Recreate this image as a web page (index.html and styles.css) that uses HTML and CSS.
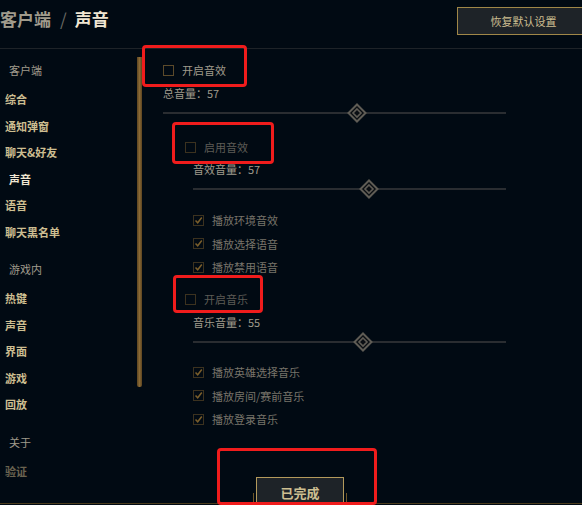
FILE: index.html
```html
<!DOCTYPE html>
<html lang="zh-CN">
<head>
  <meta charset="UTF-8">
  <title>客户端 / 声音</title>
  <link rel="stylesheet" href="styles.css">
</head>
<body>
  <div class="header">
    <h1 class="title"><span class="crumb">客户端</span><span class="sep">/</span><span class="current">声音</span></h1>
    <button class="btn reset">恢复默认设置</button>
  </div>

  <div class="main">
    <div class="nav">
      <div class="group">
        <div class="label">客户端</div>
        <div class="item">综合</div>
        <div class="item">通知弹窗</div>
        <div class="item">聊天&amp;好友</div>
        <div class="item active">声音</div>
        <div class="item">语音</div>
        <div class="item">聊天黑名单</div>
      </div>
      <div class="group">
        <div class="label">游戏内</div>
        <div class="item">热键</div>
        <div class="item">声音</div>
        <div class="item">界面</div>
        <div class="item">游戏</div>
        <div class="item">回放</div>
      </div>
      <div class="group">
        <div class="label">关于</div>
        <div class="item faded">验证</div>
      </div>
    </div>

    <div class="scrollbar"><div class="thumb"></div></div>

    <div class="content">
      <div class="check main-toggle"><span class="box"></span>开启音效</div>
      <div class="vol">总音量：57</div>
      <div class="slider"><div class="track"></div><div class="knob" style="left:57%"><svg width="20" height="20" viewBox="0 0 20 20"><polygon points="10,1.5 18.5,10 10,18.5 1.5,10" fill="#0a0e13" stroke="#5f5c55" stroke-width="2"/><polygon points="10,6 14,10 10,14 6,10" fill="none" stroke="#5f5c55" stroke-width="1.6"/></svg></div></div>

      <div class="section">
        <div class="check toggle dim"><span class="box"></span>启用音效</div>
        <div class="sub">
          <div class="vol">音效音量：57</div>
          <div class="slider"><div class="track"></div><div class="knob" style="left:57%"><svg width="20" height="20" viewBox="0 0 20 20"><polygon points="10,1.5 18.5,10 10,18.5 1.5,10" fill="#0a0e13" stroke="#5f5c55" stroke-width="2"/><polygon points="10,6 14,10 10,14 6,10" fill="none" stroke="#5f5c55" stroke-width="1.6"/></svg></div></div>
          <div class="list">
            <div class="check checked"><span class="box"><svg width="9" height="9" viewBox="0 0 9 9"><polyline points="1.5,4.5 3.7,6.8 7.8,1.5" fill="none" stroke="#7a5e2b" stroke-width="1.5"/></svg></span>播放环境音效</div>
            <div class="check checked"><span class="box"><svg width="9" height="9" viewBox="0 0 9 9"><polyline points="1.5,4.5 3.7,6.8 7.8,1.5" fill="none" stroke="#7a5e2b" stroke-width="1.5"/></svg></span>播放选择语音</div>
            <div class="check checked"><span class="box"><svg width="9" height="9" viewBox="0 0 9 9"><polyline points="1.5,4.5 3.7,6.8 7.8,1.5" fill="none" stroke="#7a5e2b" stroke-width="1.5"/></svg></span>播放禁用语音</div>
          </div>
        </div>
      </div>

      <div class="section music">
        <div class="check toggle dim"><span class="box"></span>开启音乐</div>
        <div class="sub">
          <div class="vol">音乐音量：55</div>
          <div class="slider"><div class="track"></div><div class="knob" style="left:55%"><svg width="20" height="20" viewBox="0 0 20 20"><polygon points="10,1.5 18.5,10 10,18.5 1.5,10" fill="#0a0e13" stroke="#5f5c55" stroke-width="2"/><polygon points="10,6 14,10 10,14 6,10" fill="none" stroke="#5f5c55" stroke-width="1.6"/></svg></div></div>
          <div class="list">
            <div class="check checked"><span class="box"><svg width="9" height="9" viewBox="0 0 9 9"><polyline points="1.5,4.5 3.7,6.8 7.8,1.5" fill="none" stroke="#7a5e2b" stroke-width="1.5"/></svg></span>播放英雄选择音乐</div>
            <div class="check checked"><span class="box"><svg width="9" height="9" viewBox="0 0 9 9"><polyline points="1.5,4.5 3.7,6.8 7.8,1.5" fill="none" stroke="#7a5e2b" stroke-width="1.5"/></svg></span>播放房间/赛前音乐</div>
            <div class="check checked"><span class="box"><svg width="9" height="9" viewBox="0 0 9 9"><polyline points="1.5,4.5 3.7,6.8 7.8,1.5" fill="none" stroke="#7a5e2b" stroke-width="1.5"/></svg></span>播放登录音乐</div>
          </div>
        </div>
      </div>
    </div>
  </div>

  <div class="footer">
    <div class="line"><span class="tick"></span><button class="btn done">已完成</button><span class="tick"></span></div>
  </div>

  <!-- red annotation boxes -->
  <div class="mark m1"></div>
  <div class="mark m2"></div>
  <div class="mark m3"></div>
  <div class="mark m4"></div>
</body>
</html>
```

FILE: styles.css
```css
body {
  margin: 0;
  width: 582px;
  height: 505px;
  overflow: hidden;
  position: relative;
  background: #010a13;
  font-family: "Noto Sans CJK SC", "Noto Sans", sans-serif;
  color: #a09b8c;
}
.header {
  height: 48px;
  display: flex;
  justify-content: space-between;
  align-items: flex-start;
  border-bottom: 1px solid #1e2328;
}
.title {
  margin: 6px 0 0;
  font-size: 17px;
  font-weight: bold;
  line-height: 26px;
}
.crumb {
  color: #a09b8c;
}
.sep {
  color: #6b6a64;
  margin: 0 8px 0 9px;
  font-weight: normal;
}
.current {
  color: #f0e6d2;
}
.btn {
  font-family: "Noto Sans CJK SC", "Noto Sans", sans-serif;
  background: #1e2328;
  color: #cdbe91;
  border: 1px solid #a08748;
  cursor: pointer;
}
.reset {
  margin: 7px -8px 0 0;
  width: 133px;
  height: 28px;
  font-size: 11px;
  padding: 0;
}
.main {
  display: flex;
  height: 428px;
}
.nav {
  width: 137px;
  padding-top: 8px;
}
.group + .group {
  margin-top: 11px;
}
.label {
  padding-left: 9px;
  font-size: 11px;
  line-height: 26.5px;
  margin-bottom: 2.5px;
  color: #a09b8c;
}
.item {
  padding-left: 5px;
  font-size: 11px;
  font-weight: bold;
  line-height: 26.5px;
  color: #cdbe91;
}
.item.active {
  padding-left: 9px;
  color: #f0e6d2;
}
.item.faded {
  color: #6a6350;
}
.scrollbar {
  width: 5px;
}
.scrollbar .thumb {
  margin-top: 8px;
  height: 330px;
  background: linear-gradient(90deg, #5c4420, #8a6a35 50%, #5c4420);
  border-radius: 0 0 2px 2px;
}
.content {
  flex: 1;
  padding: 11px 76px 0 21px;
}
.check {
  display: flex;
  align-items: center;
  height: 20px;
  font-size: 11px;
}
.box {
  width: 9px;
  height: 9px;
  border: 1px solid #5c4a2a;
  margin-right: 8px;
  display: flex;
  align-items: center;
  justify-content: center;
}
.main-toggle {
  color: #a09b8c;
}
.check.dim {
  color: #5e5c56;
}
.check.dim .box {
  border-color: #3c321f;
}
.vol {
  height: 16px;
  line-height: 16px;
  font-size: 11px;
  margin-top: 5px;
}
.slider {
  position: relative;
  height: 20px;
  margin-top: 2px;
}
.track {
  position: absolute;
  left: 0;
  right: 0;
  top: 9px;
  height: 2px;
  background: #2a2d31;
}
.knob {
  position: absolute;
  top: 0;
  width: 20px;
  height: 20px;
  margin-left: -12px;
}
.knob svg {
  display: block;
}
.section {
  margin-top: 14px;
  padding-left: 22px;
}
.section.music {
  margin-top: 12px;
}
.sub {
  padding-left: 8px;
}
.sub .vol {
  margin-top: 4px;
}
.section.music .sub .vol {
  margin-top: 5px;
}
.list {
  margin-top: 11px;
}
.section.music .list {
  margin-top: 10px;
}
.check.checked {
  color: #78746a;
}
.check.checked .box {
  border-color: #3c321f;
}
.check.checked + .check.checked {
  margin-top: 3.5px;
}
.footer {
  height: 28px;
  position: relative;
}
.line {
  position: absolute;
  left: 0;
  right: 0;
  top: 0;
  height: 26px;
  padding-left: 18px;
  border-bottom: 1px solid #4a3b1c;
  display: flex;
  justify-content: center;
  align-items: flex-start;
}
.tick {
  width: 1px;
  height: 10px;
  margin-top: 16px;
  background: #6e5628;
}
.done {
  width: 88px;
  height: 34px;
  margin: 0 2px;
  font-size: 13px;
  font-weight: bold;
  padding: 0 0 4px;
  border-color: #b39a5c;
}
.mark {
  position: absolute;
  border: 3px solid #f01c1c;
  border-radius: 4px;
  box-sizing: border-box;
}
.m1 { left: 142px; top: 45px; width: 105px; height: 42px; }
.m2 { left: 172px; top: 122px; width: 102px; height: 42px; }
.m3 { left: 173px; top: 275px; width: 90px; height: 38px; }
.m4 { left: 217px; top: 448px; width: 160px; height: 57px; }
```
